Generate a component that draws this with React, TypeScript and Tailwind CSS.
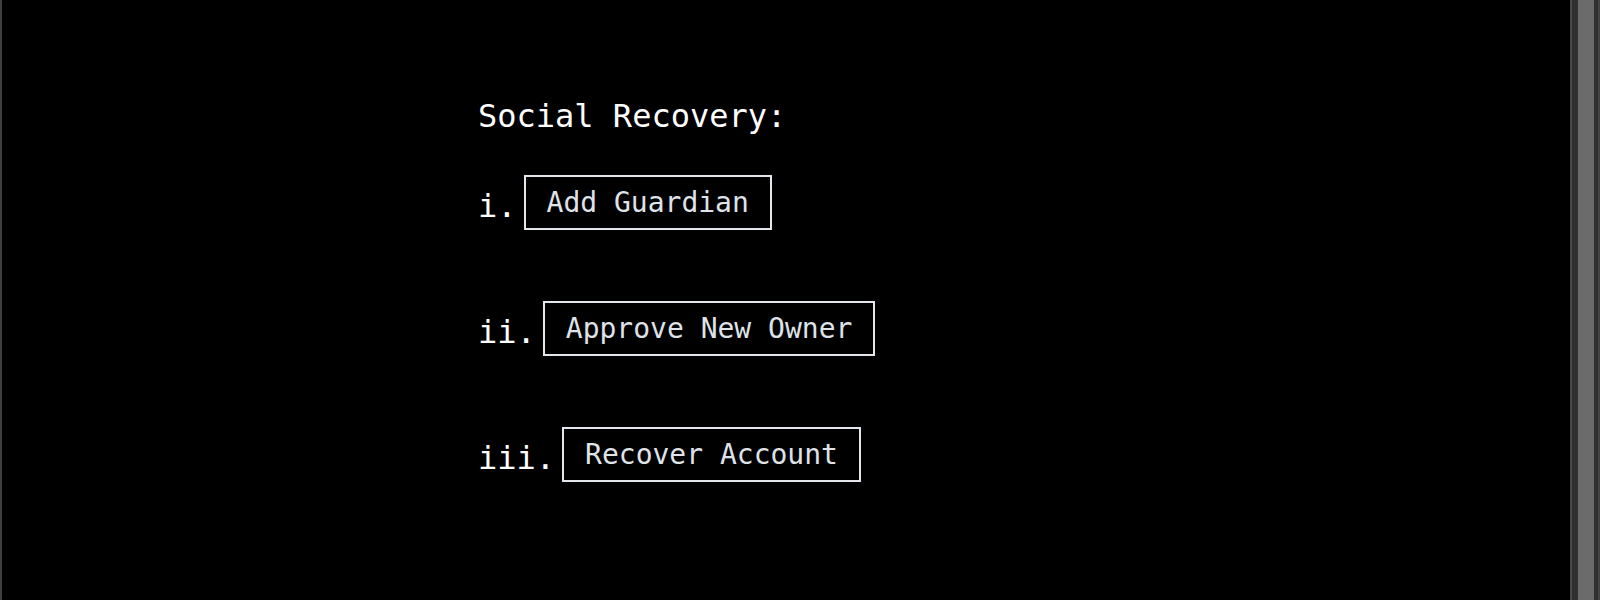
const mono = "font-['DejaVu_Sans_Mono','Liberation_Mono',monospace]";

const steps = [
	{ label: "i.", action: "Add Guardian" },
	{ label: "ii.", action: "Approve New Owner" },
	{ label: "iii.", action: "Recover Account" },
];

export default function App() {
	return (
		<div className={`flex h-[600px] w-full bg-black ${mono}`}>
			<div className="w-[2px] bg-[#3f3f3f]" />
			<main className="flex-1 pl-[476px] pt-[92px]">
				<h2 className="text-[32px] leading-[48px] text-white">
					Social Recovery:
				</h2>
				<ol className="mt-[35px] flex flex-col gap-[71px]">
					{steps.map((step) => (
						<li key={step.label} className="flex items-end">
							<span className="text-[32px] leading-[48px] text-white">
								{step.label}
							</span>
							<button
								type="button"
								className="ml-[7px] border-2 border-[#e3e6eb] px-[21px] pb-[4px] pt-[5px] text-[28px] leading-[42px] text-[#dfe3e8]"
							>
								{step.action}
							</button>
						</li>
					))}
				</ol>
			</main>
			<div className="flex w-[30px]">
				<div className="w-[2px] bg-[#4a4a4a]" />
				<div className="w-[6px] bg-[#303030]" />
				<div className="w-[16px] bg-[#6b6b6b]" />
				<div className="w-[4px] bg-[#303030]" />
				<div className="w-[2px] bg-[#444444]" />
			</div>
		</div>
	);
}
